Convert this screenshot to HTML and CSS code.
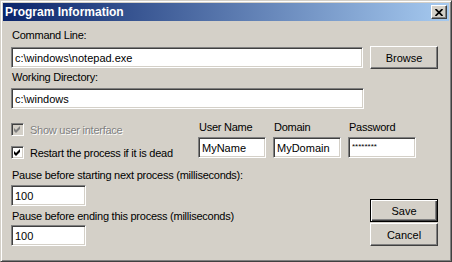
FILE: index.html
```html
<!DOCTYPE html>
<html lang="en">
<head>
    <meta charset="UTF-8">
    <title>Program Information</title>
    <link rel="stylesheet" href="styles.css">
</head>
<body>
    <div class="window">
        <div class="titlebar">
            <span class="title">Program Information</span>
            <div class="close-btn">
                <svg width="8" height="7" viewBox="0 0 8 7"><path d="M0.5 0 L7.5 7 M7.5 0 L0.5 7" stroke="#000" stroke-width="1.7" fill="none"/></svg>
            </div>
        </div>
        <div class="content">
            <div class="label">Command Line:</div>
            <div class="row">
                <input class="field wide" type="text" value="c:\windows\notepad.exe">
                <button class="btn">Browse</button>
            </div>
            <div class="label label-dir">Working Directory:</div>
            <input class="field wide dir" type="text" value="c:\windows">

            <div class="options">
                <div class="checks">
                    <div class="check disabled">
                        <span class="box"><svg width="9" height="9" viewBox="0 0 9 9"><path d="M1 3 L3 5 L7 1 L7 4 L3 8 L1 6 Z" fill="#808080"/></svg></span>
                        Show user interface
                    </div>
                    <div class="check">
                        <span class="box"><svg width="9" height="9" viewBox="0 0 9 9"><path d="M1 3 L3 5 L7 1 L7 4 L3 8 L1 6 Z" fill="#000"/></svg></span>
                        Restart the process if it is dead
                    </div>
                </div>
                <div class="account">
                    <div class="acct-field">
                        <div class="label">User Name</div>
                        <input class="field small" type="text" value="MyName">
                    </div>
                    <div class="acct-field">
                        <div class="label">Domain</div>
                        <input class="field small" type="text" value="MyDomain">
                    </div>
                    <div class="acct-field">
                        <div class="label">Password</div>
                        <input class="field small pwd" type="text" value="********">
                    </div>
                </div>
            </div>

            <div class="bottom">
                <div class="pauses">
                    <div class="label">Pause before starting next process (milliseconds):</div>
                    <input class="field num" type="text" value="100">
                    <div class="label label-end">Pause before ending this process (milliseconds)</div>
                    <input class="field num num-end" type="text" value="100">
                </div>
                <div class="actions">
                    <button class="btn default">Save</button>
                    <button class="btn">Cancel</button>
                </div>
            </div>
        </div>
    </div>
</body>
</html>
```

FILE: styles.css
```css
html, body {
    margin: 0;
    padding: 0;
    background: #d4d0c8;
}
body {
    font-family: "Liberation Sans", Arial, sans-serif;
    font-size: 11px;
    letter-spacing: -0.25px;
    color: #000;
}
.window {
    width: 452px;
    height: 262px;
    box-sizing: border-box;
    background: #d4d0c8;
    border: 1px solid;
    border-color: #d4d0c8 #404040 #404040 #d4d0c8;
    box-shadow: inset 1px 1px #fff, inset -1px -1px #808080;
    padding: 2px;
}
.titlebar {
    height: 18px;
    display: flex;
    align-items: center;
    justify-content: space-between;
    background: linear-gradient(to right, #0a246a, #a6caf0);
    padding: 0 2px;
}
.title {
    color: #fff;
    font-weight: bold;
    font-size: 12px;
    letter-spacing: 0;
}
.close-btn {
    width: 16px;
    height: 14px;
    box-sizing: border-box;
    background: #d4d0c8;
    border: 1px solid;
    border-color: #fff #404040 #404040 #fff;
    box-shadow: inset -1px -1px #808080;
    display: flex;
    align-items: center;
    justify-content: center;
}
.content {
    padding: 8px 11px 0 8px;
}
.label {
    line-height: 13px;
    height: 13px;
    padding-left: 1px;
    white-space: nowrap;
}
.row {
    display: flex;
    align-items: flex-start;
    gap: 7px;
    margin-top: 4px;
}
.field {
    box-sizing: border-box;
    height: 21px;
    margin: 0;
    padding: 0 3px;
    font-family: inherit;
    font-size: 11px;
    letter-spacing: 0;
    color: #000;
    background: #fff;
    border: 1px solid;
    border-color: #808080 #fff #fff #808080;
    box-shadow: inset 1px 1px #404040, inset -1px -1px #d4d0c8;
    outline: none;
    display: block;
}
.wide {
    width: 353px;
}
.row .field {
    margin-top: 1px;
}
.label-dir {
    margin-top: 2px;
}
.dir {
    margin-top: 4px;
}
.btn {
    width: 68px;
    height: 23px;
    box-sizing: border-box;
    margin: 0;
    padding: 0;
    font-family: inherit;
    font-size: 11px;
    letter-spacing: 0;
    color: #000;
    background: #d4d0c8;
    border: 1px solid;
    border-color: #fff #404040 #404040 #fff;
    box-shadow: inset -1px -1px #808080;
}
.btn.default {
    border-color: #000;
    box-shadow: inset 1px 1px #fff, inset -1px -1px #404040, inset -2px -2px #808080;
}
.options {
    display: flex;
    margin-top: 12px;
}
.checks {
    width: 187px;
    padding-top: 2px;
    display: flex;
    flex-direction: column;
    gap: 10px;
}
.check {
    display: flex;
    align-items: center;
    gap: 6px;
    height: 13px;
    white-space: nowrap;
}
.check.disabled {
    color: #808080;
    text-shadow: 1px 1px #fff;
}
.box {
    width: 13px;
    height: 13px;
    box-sizing: border-box;
    background: #fff;
    border: 1px solid;
    border-color: #808080 #fff #fff #808080;
    box-shadow: inset 1px 1px #404040, inset -1px -1px #d4d0c8;
    display: flex;
    align-items: center;
    justify-content: center;
    flex: none;
}
.check.disabled .box {
    background: #d4d0c8;
}
.account {
    display: flex;
    gap: 7px;
}
.small {
    width: 68px;
    margin-top: 3px;
}
.pwd {
    font-size: 8px;
    padding-bottom: 3px;
}
.bottom {
    display: flex;
    justify-content: space-between;
    align-items: flex-end;
    margin-top: 10px;
}
.num {
    width: 75px;
    margin-top: 3px;
}
.label-end {
    margin-top: 4px;
}
.num-end {
    margin-top: 2px;
}
.actions {
    display: flex;
    flex-direction: column;
    gap: 1px;
}
```
